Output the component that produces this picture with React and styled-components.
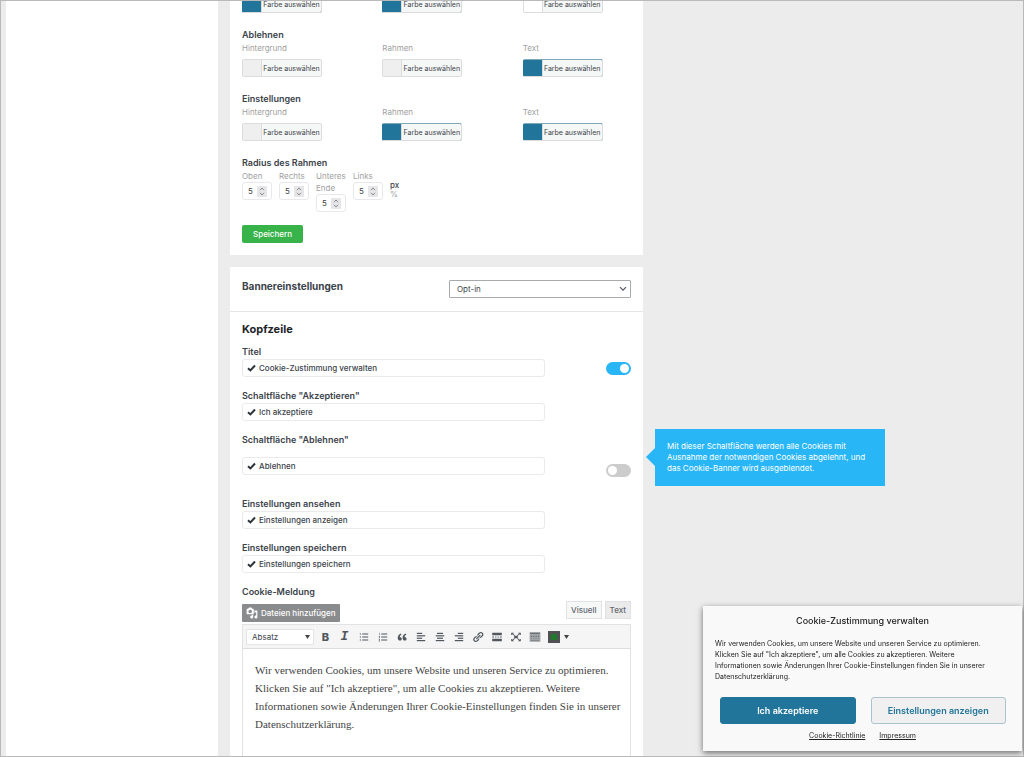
import React from "react";
import styled, { createGlobalStyle } from "styled-components";

const GlobalStyle = createGlobalStyle`
  *, *::before, *::after { box-sizing: border-box; }
  body { margin: 0; background: #ececec; }
  body, button, input, select { font-family: Inter, "Liberation Sans", sans-serif; color: #3c434a; }
  h2, h3, h4, p { margin: 0; }
`;

const Screen = styled.div`
  height: 100vh;
  overflow: hidden;
  border: 1px solid #b9b9b9;
  padding-left: 5px;
  display: grid;
  grid-template-columns: 212fr 413fr 368fr;
  column-gap: 12px;
  background: #ececec;
`;

const Sidebar = styled.aside`
  background: #fff;
`;

const Main = styled.main`
  display: flex;
  flex-direction: column;
  gap: 12px;
  margin-top: -6px;
  min-width: 0;
`;

const Card = styled.section`
  background: #fff;
`;

const CardBody = styled.div`
  padding: ${(p) => p.$top || 0}px 12px 12px;
`;

const ColorGroup = styled.div`
  margin-bottom: 15px;
`;

const GroupTitle = styled.h4`
  font-size: 9px;
  line-height: 14px;
  font-weight: 600;
`;

const Columns = styled.div`
  display: grid;
  grid-template-columns: repeat(3, 1fr);
  column-gap: 32px;
`;

const Caption = styled.div`
  font-size: 8px;
  line-height: 12px;
  color: #a0a0a0;
  margin-bottom: ${(p) => p.$gap || 0}px;
`;

const Picker = styled.button`
  display: flex;
  width: 80px;
  height: 18px;
  padding: 0;
  border: 1px solid #dcdcde;
  border-top-color: ${(p) => (p.$color === "#21759b" ? "#7fa9bd" : "#dcdcde")};
  border-left-color: ${(p) => (p.$color === "#21759b" ? "#21759b" : "#dcdcde")};
  border-radius: 2px;
  background: ${(p) => p.$color};
  overflow: hidden;
`;

const PickerText = styled.span`
  flex: 1;
  margin-left: 18px;
  border-left: 1px solid #dcdcde;
  background: #f6f7f7;
  font-size: 7px;
  line-height: 17px;
  font-weight: 400;
  text-align: center;
  white-space: nowrap;
`;

const RadiusRow = styled.div`
  display: grid;
  grid-template-columns: repeat(4, 31px) auto;
  column-gap: 6px;
  justify-content: start;
  align-items: start;
  margin-bottom: 13px;
`;

const RadiusLabel = styled.label`
  font-size: 8px;
  line-height: 12px;
  color: #a0a0a0;
`;

const NumberBox = styled.span`
  display: flex;
  align-items: center;
  width: 30px;
  height: 18px;
  padding: 0 4px 0 5px;
  border: 1px solid #e8e8ea;
  border-radius: 3px;
`;

const NumberInput = styled.input`
  width: 9px;
  padding: 0;
  border: 0;
  font-size: 8px;
  line-height: 12px;
  appearance: textfield;
  &::-webkit-inner-spin-button { appearance: none; margin: 0; }
`;

const Units = styled.div`
  padding-top: 11px;
  font-size: 8px;
  line-height: 9px;
  color: #a0a0a0;
  strong { display: block; font-weight: 500; color: #3c434a; }
`;

const SaveButton = styled.button`
  display: block;
  width: 61px;
  height: 18px;
  padding: 0;
  border: 0;
  border-radius: 2px;
  background: #37b34a;
  color: #fff;
  font-size: 8px;
  font-weight: 500;
`;

const CardHeader = styled.header`
  display: flex;
  justify-content: space-between;
  padding: 13px 12px;
  border-bottom: 1px solid #e6e6e6;
`;

const CardTitle = styled.h2`
  font-size: 10px;
  line-height: 12px;
  font-weight: 700;
`;

const SelectBox = styled.span`
  position: relative;
  display: block;
  width: ${(p) => p.$width}px;
  svg { position: absolute; right: 4px; top: 50%; transform: translateY(-50%); pointer-events: none; }
`;

const Select = styled.select`
  display: block;
  width: 100%;
  height: ${(p) => p.$height}px;
  padding: 0 ${(p) => p.$pad}px;
  border: 1px solid ${(p) => p.$border};
  border-radius: 1px;
  background: #fff;
  font-size: 8px;
  appearance: none;
`;

const SectionTitle = styled.h3`
  font-size: 11px;
  line-height: 16px;
  font-weight: 700;
  color: #1d2327;
  margin-bottom: 9px;
`;

const Field = styled.div`
  position: relative;
  margin-bottom: ${(p) => (p.$tall ? 21 : 13)}px;
`;

const FieldLabel = styled.label`
  display: block;
  font-size: 9px;
  line-height: 12px;
  font-weight: 600;
  margin-bottom: ${(p) => (p.$tall ? 11 : 1)}px;
`;

const FieldRow = styled.div`
  display: flex;
  justify-content: space-between;
  align-items: ${(p) => (p.$tall ? "flex-start" : "center")};
  height: ${(p) => (p.$tall ? 20 : 18)}px;
  > input { align-self: ${(p) => (p.$tall ? "flex-end" : "center")}; }
`;

const TextBox = styled.span`
  display: flex;
  align-items: center;
  gap: 3px;
  width: 78%;
  height: 18px;
  padding: 0 4px;
  border: 1px solid #eaeaec;
  border-radius: 3px;
`;

const TextInput = styled.input`
  flex: 1;
  min-width: 0;
  padding: 0;
  border: 0;
  background: none;
  font-size: 8px;
  line-height: 12px;
  font-weight: 500;
`;

const Toggle = styled.input`
  appearance: none;
  width: 25px;
  height: 13px;
  margin: 0;
  padding: 2px;
  border-radius: 7px;
  display: flex;
  justify-content: flex-start;
  background: #ccc;
  &::before { content: ""; width: 9px; height: 9px; border-radius: 50%; background: #fff; }
  &:checked { background: #29b6f6; justify-content: flex-end; }
`;

const Tooltip = styled.div`
  position: absolute;
  left: calc(100% + 24px);
  top: -5px;
  width: 230px;
  padding: 12px;
  background: #29b6f6;
  color: #fff;
  font-size: 8px;
  line-height: 11px;
  &::before {
    content: "";
    position: absolute;
    left: -9px;
    top: 19px;
    border: 9px solid transparent;
    border-left: 0;
    border-right-color: #29b6f6;
  }
`;

const EditorTop = styled.div`
  display: flex;
  justify-content: space-between;
  align-items: flex-start;
  margin-top: 3px;
`;

const MediaButton = styled.button`
  display: flex;
  align-items: center;
  gap: 3px;
  height: 18px;
  margin: 3px 0 2px;
  padding: 0 4px;
  border: 0;
  border-radius: 1px;
  background: #8a8b8d;
  color: #fff;
  font-size: 8px;
  font-weight: 500;
`;

const Tabs = styled.div`
  display: flex;
  gap: 3px;
`;

const Tab = styled.button`
  height: 18px;
  padding: 0 4px;
  border: 1px solid #e2e2e4;
  background: ${(p) => (p.$active ? "#f6f7f7" : "#ebebeb")};
  color: #646970;
  font-size: 8px;
  font-weight: 500;
`;

const Editor = styled.div`
  border: 1px solid #e2e2e4;
`;

const Toolbar = styled.div`
  display: flex;
  align-items: center;
  height: 24px;
  padding: 0 3px;
  border-bottom: 1px solid #dcdcde;
  background: #f5f5f5;
`;

const Tools = styled.div`
  display: flex;
  margin-left: 2px;
`;

const Tool = styled.button`
  display: flex;
  align-items: center;
  justify-content: center;
  width: ${(p) => p.$width || 19}px;
  height: 18px;
  padding: 0;
  border: 0;
  background: none;
  color: #50575e;
  font-size: ${(p) => (p.$serif ? 13 : 11)}px;
  font-weight: 800;
  font-family: ${(p) => (p.$serif ? '"Liberation Mono", monospace' : 'Inter, sans-serif')};
  font-style: ${(p) => (p.$serif ? "italic" : "normal")};
`;

const Message = styled.textarea`
  display: block;
  width: 100%;
  height: 130px;
  padding: 12px 4px 12px 12px;
  border: 0;
  resize: none;
  overflow: hidden;
  font-family: "Liberation Serif", serif;
  font-size: 11px;
  line-height: 18px;
  color: #444;
`;

const Banner = styled.section`
  position: fixed;
  right: 2px;
  bottom: 6px;
  width: 319px;
  padding: 9px 12px;
  background: #f9f9f9;
  box-shadow: 0 2px 6px rgba(0, 0, 0, 0.55);
  color: #222;
`;

const BannerTitle = styled.h2`
  font-size: 9px;
  line-height: 12px;
  font-weight: 500;
  text-align: center;
  margin-bottom: 11px;
`;

const BannerText = styled.p`
  font-size: 7px;
  line-height: 11px;
  padding-right: 12px;
  margin-bottom: 15px;
`;

const BannerButtons = styled.div`
  display: grid;
  grid-template-columns: 1fr 1fr;
  gap: 15px;
  padding: 0 4px 0 5px;
  margin-bottom: 6px;
`;

const BannerButton = styled.button`
  height: 27px;
  padding: 0;
  border: 1px solid ${(p) => (p.$primary ? "#21759b" : "#a9c3cf")};
  border-radius: 3px;
  background: ${(p) => (p.$primary ? "#21759b" : "#f0f0f0")};
  color: ${(p) => (p.$primary ? "#fff" : "#21759b")};
  font-size: 9px;
  font-weight: 600;
`;

const BannerLinks = styled.nav`
  display: flex;
  justify-content: center;
  gap: 14px;
  font-size: 7px;
  line-height: 12px;
  a { color: #222; }
`;

const TEAL = "#21759b";
const PALE = "#efefef";

const Check = () => (
  <svg width="9" height="8" viewBox="0 0 9 8" aria-hidden="true">
    <path d="M1 4.2 3.4 6.4 8 1.5" fill="none" stroke="#2c3338" strokeWidth="2" />
  </svg>
);

const Chevron = () => (
  <svg width="8" height="6" viewBox="0 0 8 6" aria-hidden="true">
    <path d="M1 1.2 4 4.2 7 1.2" fill="none" stroke="#50575e" strokeWidth="1.2" />
  </svg>
);

const Caret = () => (
  <svg width="5" height="4" viewBox="0 0 5 4" aria-hidden="true">
    <path d="M0 0h5L2.5 4z" fill="#444" />
  </svg>
);

const Spinner = () => (
  <svg width="10" height="11" viewBox="0 0 10 11" aria-hidden="true">
    <rect width="10" height="11" rx="1" fill="#e6e6e9" />
    <path d="M3 4.2 5 2l2 2.2M3 6.8 5 9l2-2.2" fill="none" stroke="#8a8a90" />
  </svg>
);

const MediaIcon = () => (
  <svg width="12" height="12" viewBox="0 0 20 20" fill="#fff" aria-hidden="true">
    <path
      fillRule="evenodd"
      d="M13 11V4c0-.55-.45-1-1-1h-1.67L9 1H5L3.67 3H2c-.55 0-1 .45-1 1v7c0 .55.45 1 1 1h10c.55 0 1-.45 1-1zM7 4.5a3 3 0 1 1 0 6 3 3 0 0 1 0-6zM14 6h5v10.5a2.5 2.5 0 1 1-2-2.45V9h-3zm-4 8.05V13h2v3.5a2.5 2.5 0 1 1-2-2.45z"
    />
  </svg>
);

const lines = (rows) => rows.map(([x, y, w]) => <rect key={y} x={x} y={y} width={w} height="2" />);

const shapes = {
  bullets: (
    <>
      <path d="M3 4h2v2H3zM3 9h2v2H3zM3 14h2v2H3z" />
      <path d="M7 4.3h10v1.4H7zM7 9.3h10v1.4H7zM7 14.3h10v1.4H7z" />
    </>
  ),
  numbers: (
    <>
      <path d="M3.5 3h1v4h-1zM3 8.500h2v1l-1 1.500h1v1H3v-1l1-1.500H3zM3 13.500h2v4H3v-1h1v-.6H3v-.8h1v-.6H3z" opacity="0.8" />
      <path d="M7 4.300h10v1.400H7zM7 9.300h10v1.400H7zM7 14.300h10v1.400H7z" />
    </>
  ),
  quote: (
    <path d="M9.490 13.220c0-.74-.2-1.380-.61-1.900-.62-.78-1.830-.88-2.530-.72-.29-1.650 1.110-3.750 2.920-4.650L7.880 4c-2.730 1.300-5.420 4.280-4.960 8.050C3.210 14.430 4.590 16 6.540 16c.85 0 1.560-.25 2.120-.75s.83-1.180.83-2.030zm8.050 0c0-.74-.2-1.380-.61-1.900-.63-.78-1.830-.88-2.530-.72-.29-1.650 1.110-3.750 2.920-4.650L15.930 4c-2.730 1.300-5.410 4.280-4.950 8.050.29 2.380 1.660 3.950 3.610 3.950.85 0 1.560-.25 2.120-.75s.83-1.180.83-2.030z" />
  ),
  left: lines([[3, 3, 9], [3, 7, 14], [3, 11, 9], [3, 15, 14]]),
  center: lines([[5, 3, 10], [3, 7, 14], [5, 11, 10], [3, 15, 14]]),
  right: lines([[8, 3, 9], [3, 7, 14], [8, 11, 9], [3, 15, 14]]),
  link: (
    <path d="M17.740 2.760c1.680 1.690 1.680 4.410 0 6.100l-1.530 1.520c-1.120 1.120-2.700 1.470-4.140 1.090l2.620-2.610.76-.77.76-.76c.84-.84.84-2.200 0-3.040-.84-.85-2.200-.85-3.040 0l-.77.76-3.380 3.380c-.37-1.440-.02-3.020 1.100-4.140l1.520-1.530c1.690-1.680 4.420-1.680 6.100 0zM8.590 13.430l5.340-5.340c.42-.42.42-1.100 0-1.520-.44-.43-1.130-.39-1.530 0l-5.330 5.340c-.42.42-.42 1.100 0 1.520.44.43 1.130.39 1.520 0zm-.76 2.290l4.140-4.150c.38 1.440.03 3.020-1.090 4.140l-1.520 1.530c-1.690 1.680-4.410 1.680-6.100 0-1.680-1.680-1.680-4.420 0-6.100l1.530-1.520c1.120-1.120 2.700-1.470 4.140-1.100l-4.140 4.150c-.85.84-.85 2.200 0 3.050.84.84 2.200.84 3.040 0z" />
  ),
  more: <path d="M2 3h16v4H2zM2 9h3v2H2zM7 9h2v2H7zM11 9h2v2h-2zM15 9h3v2h-3zM2 13h16v4H2z" />,
  expand: (
    <path d="M2 3h4.500L5.200 4.300l3 3-1 1-3-3L3 6.500H2zM18 3h-4.500l1.300 1.300-3 3 1 1 3-3L17 6.500h1zM2 17h4.500l-1.300-1.300 3-3-1-1-3 3L3 13.500H2zM18 17h-4.500l1.300-1.300-3-3 1-1 3 3 1.200-1.200h1zM7 8h6v4H7z" />
  ),
  keyboard: (
    <>
      <path d="M1 2h18v16H1z" opacity="0.5" />
      <path
        d="M2 3h16v2H2zM3 8h2v2H3zM7 8h2v2H7zM11 8h2v2h-2zM15 8h2v2h-2zM3 12h2v1H3zM7 12h2v1H7zM11 12h2v1h-2zM15 12h2v1h-2zM3 15h14v1H3z"
        opacity="0.7"
      />
    </>
  ),
};

const labels = {
  bullets: "Aufzählung",
  numbers: "Nummerierung",
  quote: "Zitat",
  left: "Linksbündig",
  center: "Zentriert",
  right: "Rechtsbündig",
  link: "Link",
  more: "Weiterlesen",
  expand: "Vollbild",
  keyboard: "Werkzeugleiste",
};

const ColorPicker = ({ color }) => (
  <Picker type="button" $color={color}>
    <PickerText>Farbe auswählen</PickerText>
  </Picker>
);

const ColorSection = ({ title, colors }) => (
  <ColorGroup>
    <GroupTitle>{title}</GroupTitle>
    <Columns>
      {["Hintergrund", "Rahmen", "Text"].map((name, i) => (
        <div key={name}>
          <Caption $gap={5}>{name}</Caption>
          <ColorPicker color={colors[i]} />
        </div>
      ))}
    </Columns>
  </ColorGroup>
);

const TextField = ({ id, label, value, toggle, tall, children }) => (
  <Field $tall={tall}>
    <FieldLabel htmlFor={id} $tall={tall}>{label}</FieldLabel>
    <FieldRow $tall={tall}>
      <TextBox>
        <Check />
        <TextInput id={id} type="text" defaultValue={value} />
      </TextBox>
      {toggle && <Toggle type="checkbox" defaultChecked={toggle === "on"} aria-label={label} />}
    </FieldRow>
    {children}
  </Field>
);

const MESSAGE =
  'Wir verwenden Cookies, um unsere Website und unseren Service zu optimieren. Klicken Sie auf "Ich akzeptiere", um alle Cookies zu akzeptieren. Weitere Informationen sowie Änderungen Ihrer Cookie-Einstellungen finden Sie in unserer Datenschutzerklärung.';

export default function App() {
  return (
    <>
      <GlobalStyle />
      <Screen>
        <Sidebar />
        <Main>
          <Card>
            <CardBody>
              <ColorGroup>
                <Columns>
                  <ColorPicker color={TEAL} />
                  <ColorPicker color={TEAL} />
                  <ColorPicker color="#ffffff" />
                </Columns>
              </ColorGroup>
              <ColorSection title="Ablehnen" colors={[PALE, PALE, TEAL]} />
              <ColorSection title="Einstellungen" colors={[PALE, TEAL, TEAL]} />
              <GroupTitle>Radius des Rahmen</GroupTitle>
              <RadiusRow>
                {["Oben", "Rechts", "Unteres Ende", "Links"].map((name) => (
                  <RadiusLabel key={name}>
                    {name}
                    <NumberBox>
                      <NumberInput type="number" defaultValue={5} />
                      <Spinner />
                    </NumberBox>
                  </RadiusLabel>
                ))}
                <Units>
                  <strong>px</strong>%
                </Units>
              </RadiusRow>
              <SaveButton type="button">Speichern</SaveButton>
            </CardBody>
          </Card>

          <Card>
            <CardHeader>
              <CardTitle>Bannereinstellungen</CardTitle>
              <SelectBox $width={182}>
                <Select $height={18} $pad={7} $border="#a7aaad" aria-label="Bannereinstellungen">
                  <option>Opt-in</option>
                </Select>
                <Chevron />
              </SelectBox>
            </CardHeader>
            <CardBody $top={9}>
              <SectionTitle>Kopfzeile</SectionTitle>
              <TextField id="title" label="Titel" value="Cookie-Zustimmung verwalten" toggle="on" />
              <TextField id="accept" label={'Schaltfläche "Akzeptieren"'} value="Ich akzeptiere" />
              <TextField id="deny" label={'Schaltfläche "Ablehnen"'} value="Ablehnen" toggle="off" tall>
                <Tooltip role="tooltip">
                  Mit dieser Schaltfläche werden alle Cookies mit Ausnahme der notwendigen Cookies abgelehnt, und das
                  Cookie-Banner wird ausgeblendet.
                </Tooltip>
              </TextField>
              <TextField id="view" label="Einstellungen ansehen" value="Einstellungen anzeigen" />
              <TextField id="save" label="Einstellungen speichern" value="Einstellungen speichern" />
              <FieldLabel htmlFor="message">Cookie-Meldung</FieldLabel>
              <EditorTop>
                <MediaButton type="button">
                  <MediaIcon />
                  Dateien hinzufügen
                </MediaButton>
                <Tabs>
                  <Tab type="button" $active>Visuell</Tab>
                  <Tab type="button">Text</Tab>
                </Tabs>
              </EditorTop>
              <Editor>
                <Toolbar>
                  <SelectBox $width={68}>
                    <Select $height={16} $pad={5} $border="#e4e4e6" aria-label="Absatzformat">
                      <option>Absatz</option>
                    </Select>
                    <Caret />
                  </SelectBox>
                  <Tools>
                    <Tool type="button" aria-label="Fett">B</Tool>
                    <Tool type="button" aria-label="Kursiv" $serif>I</Tool>
                    {Object.keys(shapes).map((name) => (
                      <Tool key={name} type="button" aria-label={labels[name]}>
                        <svg width="12" height="12" viewBox="0 0 20 20" fill="currentColor">{shapes[name]}</svg>
                      </Tool>
                    ))}
                    <Tool type="button" aria-label="Farbe">
                      <svg width="12" height="12" viewBox="0 0 12 12">
                        <rect width="12" height="12" fill="#505055" />
                        <rect x="3" y="3" width="6" height="6" fill="#1f7a2c" />
                      </svg>
                    </Tool>
                    <Tool type="button" aria-label="Farbauswahl" $width={6}>
                      <Caret />
                    </Tool>
                  </Tools>
                </Toolbar>
                <Message id="message" defaultValue={MESSAGE} />
              </Editor>
            </CardBody>
          </Card>
        </Main>
      </Screen>

      <Banner aria-label="Cookie-Zustimmung verwalten">
        <BannerTitle>Cookie-Zustimmung verwalten</BannerTitle>
        <BannerText>{MESSAGE}</BannerText>
        <BannerButtons>
          <BannerButton type="button" $primary>Ich akzeptiere</BannerButton>
          <BannerButton type="button">Einstellungen anzeigen</BannerButton>
        </BannerButtons>
        <BannerLinks>
          <a href="#richtlinie">Cookie-Richtlinie</a>
          <a href="#impressum">Impressum</a>
        </BannerLinks>
      </Banner>
    </>
  );
}
